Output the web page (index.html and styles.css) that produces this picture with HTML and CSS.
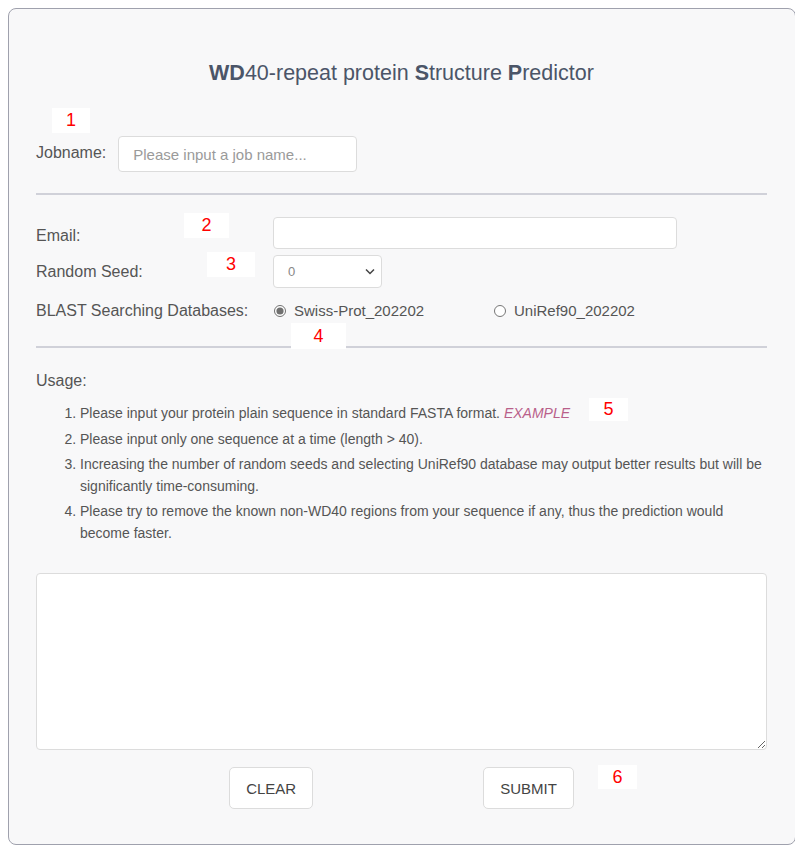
FILE: index.html
```html
<!DOCTYPE html>
<html lang="en">
<head>
<meta charset="UTF-8">
<meta name="viewport" content="width=device-width, initial-scale=1.0">
<title>WD40-repeat protein Structure Predictor</title>
<link rel="stylesheet" href="styles.css">
</head>
<body>
<div class="card">
    <h2 class="title"><b>WD</b>40-repeat protein <b>S</b>tructure <b>P</b>redictor</h2>

    <div class="job-row">
        <label for="jobname">Jobname:</label>
        <input type="text" id="jobname" class="job-input" placeholder="Please input a job name...">
    </div>

    <hr class="divider divider-top">

    <div class="opts">
        <label for="email" class="email-label">Email:</label>
        <input type="text" id="email" class="email-input">

        <label for="seed">Random Seed:</label>
        <span class="select-wrap">
            <select id="seed" class="seed-select">
                <option>0</option>
                <option>1</option>
                <option>2</option>
            </select>
            <svg class="chevron" width="10" height="7" viewBox="0 0 10 7"><path d="M1 1.5 L5 5.5 L9 1.5" fill="none" stroke="#444" stroke-width="1.5"/></svg>
        </span>

        <span class="label">BLAST Searching Databases:</span>
        <div class="radios">
            <label class="radio first"><input type="radio" name="db" checked> Swiss-Prot_202202</label>
            <label class="radio"><input type="radio" name="db"> UniRef90_202202</label>
        </div>
    </div>

    <hr class="divider divider-bottom">

    <p class="usage">Usage:</p>
    <ol class="usage-list">
        <li>Please input your protein plain sequence in standard FASTA format. <a class="example" href="#">EXAMPLE</a></li>
        <li>Please input only one sequence at a time (length &gt; 40).</li>
        <li>Increasing the number of random seeds and selecting UniRef90 database may output better results but will be significantly time-consuming.</li>
        <li>Please try to remove the known non-WD40 regions from your sequence if any, thus the prediction would become faster.</li>
    </ol>

    <textarea class="seq"></textarea>

    <div class="buttons">
        <button type="button">CLEAR</button>
        <button type="submit">SUBMIT</button>
    </div>

    <!-- numbered callouts -->
    <span class="mark m1">1</span>
    <span class="mark m2">2</span>
    <span class="mark m3">3</span>
    <span class="mark m4">4</span>
    <span class="mark m5">5</span>
    <span class="mark m6">6</span>
</div>
</body>
</html>
```

FILE: styles.css
```css
body {
    margin: 8px;
    background-color: #fff;
    font-family: "Liberation Sans", Arial, sans-serif;
    color: #555;
}
.card {
    position: relative;
    box-sizing: border-box;
    width: 788px;
    padding: 0 28px 35px 27px;
    background-color: #f8f8f9;
    border: 1px solid #9fa1ad;
    border-radius: 8px;
}
.title {
    margin: 51px 0 0;
    text-align: center;
    font-size: 21.5px;
    line-height: 26px;
    font-weight: normal;
    color: #4b5568;
}
.title b {
    font-weight: bold;
}
.job-row {
    display: flex;
    align-items: center;
    margin-top: 50px;
    font-size: 16px;
}
.job-row label {
    margin-right: 12px;
    padding-bottom: 2px;
}
input[type="text"],
select,
textarea {
    box-sizing: border-box;
    background-color: #fff;
    border: 1px solid #dcdcdc;
    border-radius: 4px;
    font-family: "Liberation Sans", Arial, sans-serif;
    font-size: 15px;
    color: #555;
    outline: none;
}
.job-input {
    width: 239px;
    height: 36px;
    padding: 0 14px;
}
.job-input::placeholder {
    color: #9a9a9a;
}
.divider {
    margin: 0;
    border: none;
    border-top: 2px solid #d0d1d9;
}
.divider-top {
    margin-top: 21px;
}
.opts {
    display: grid;
    grid-template-columns: 237px 1fr;
    align-items: center;
    row-gap: 6px;
    margin-top: 22px;
    font-size: 16px;
}
.email-label {
    padding-top: 5px;
}
.email-input {
    width: 404px;
    height: 32px;
    padding: 0 10px;
}
.select-wrap {
    position: relative;
    width: 109px;
    display: inline-block;
}
.seed-select {
    appearance: none;
    width: 109px;
    height: 33px;
    padding: 0 14px;
    font-size: 13px;
    color: #888;
}
.chevron {
    position: absolute;
    right: 7px;
    top: 13px;
    pointer-events: none;
}
.opts .label {
    margin-top: 5px;
    line-height: 24px;
}
.radios {
    display: flex;
    margin-top: 5px;
    line-height: 24px;
    font-size: 15px;
}
.radio {
    display: flex;
    align-items: center;
}
.radio.first {
    width: 220px;
}
.radio input {
    margin: 0 8px 0 1px;
    width: 12px;
    height: 12px;
    accent-color: #707070;
}
.divider-bottom {
    margin-top: 23px;
}
.usage {
    margin: 23px 0 0;
    font-size: 16px;
    line-height: 20px;
}
.usage-list {
    margin: 12px 0 0;
    padding-left: 44px;
    font-size: 14px;
    line-height: 21.5px;
}
.usage-list li {
    margin-bottom: 4px;
}
.example {
    font-style: italic;
    color: #b9608a;
    text-decoration: none;
}
.seq {
    display: block;
    width: 100%;
    height: 177px;
    margin-top: 29px;
    padding: 8px;
}
.buttons {
    display: flex;
    justify-content: center;
    gap: 170px;
    margin-top: 17px;
}
.buttons button {
    height: 42px;
    padding: 0 16px;
    background-color: #fff;
    border: 1px solid #dcdcdc;
    border-radius: 5px;
    font-family: "Liberation Sans", Arial, sans-serif;
    font-size: 15px;
    color: #444;
    cursor: pointer;
}
.mark {
    position: absolute;
    display: flex;
    align-items: center;
    justify-content: center;
    background-color: #fff;
    color: #f00;
    font-size: 18px;
}
.m1 { left: 43px; top: 99px; width: 38px; height: 25px; }
.m2 { left: 175px; top: 204px; width: 45px; height: 25px; }
.m3 { left: 198px; top: 243px; width: 48px; height: 25px; }
.m4 { left: 282px; top: 314px; width: 55px; height: 26px; }
.m5 { left: 580px; top: 389px; width: 39px; height: 23px; }
.m6 { left: 589px; top: 756px; width: 39px; height: 24px; }
```
